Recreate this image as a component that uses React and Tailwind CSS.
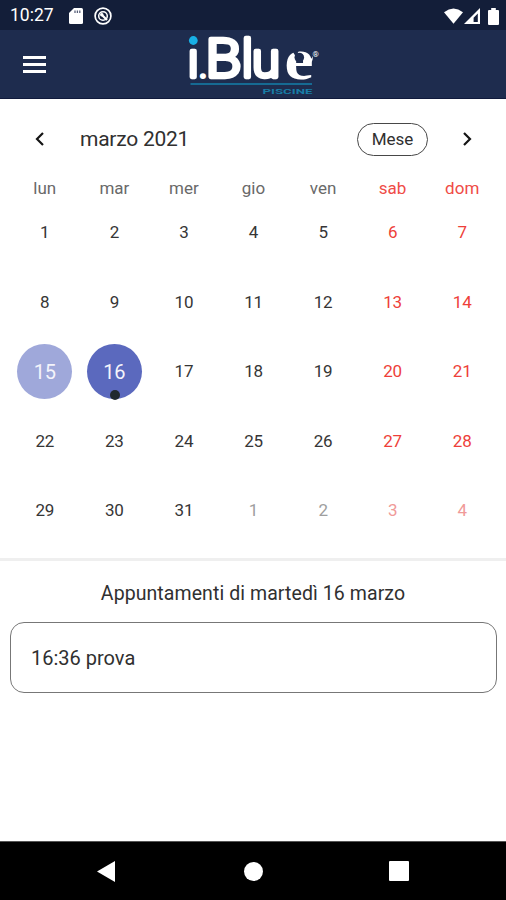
const WEEKDAYS = ["lun", "mar", "mer", "gio", "ven", "sab", "dom"];

// March 2021 starts on a Monday; the last row spills into April.
const DAYS = Array.from({ length: 35 }, (_, i) => ({
  label: i < 31 ? i + 1 : i - 30,
  weekend: i % 7 > 4,
  outside: i >= 31,
}));

function dayColor({ weekend, outside }) {
  if (weekend) return outside ? "text-[#f09a98]" : "text-[#ee3f3a]";
  return outside ? "text-[#9e9e9e]" : "text-[#363636]";
}

function StatusBar() {
  return (
    <div className="flex h-[30px] items-center bg-[#131e39] pt-[2px] pl-[10px] pr-[7px] text-white">
      <span className="w-[45px] whitespace-nowrap text-[17.5px] leading-none">10:27</span>
      <svg className="ml-[14px] h-[16px] w-[14px]" viewBox="0 0 14 16">
        <path d="M5 0h7.500q1.500 0 1.500 1.500v13q0 1.500-1.500 1.500h-11q-1.500 0-1.500-1.500V5z" fill="#fff" />
        <path d="M6 2.500v2.500M8.400 2.500v2.500M10.800 2.500v2.500" stroke="#59617a" strokeWidth="1.300" />
      </svg>
      <svg className="ml-[11px] size-[18px]" viewBox="0 0 18 18" fill="none" stroke="#fff">
        <circle cx="9" cy="9" r="7.900" strokeWidth="1.700" />
        <circle cx="9" cy="9" r="4.300" strokeWidth="1.500" />
        <path d="M7 7l6 6" strokeWidth="2.200" />
        <circle cx="7.800" cy="7.800" r="1.700" fill="#fff" stroke="none" />
      </svg>
      <svg className="ml-auto h-[16px] w-[19px]" viewBox="0 0 19 16">
        <path d="M0 4.200Q9.500-3.200 19 4.200L9.500 15.800z" fill="#fff" />
      </svg>
      <svg className="ml-[1px] h-[16px] w-[16px]" viewBox="0 0 16 16">
        <path d="M16 0v16H0z M13.800 5.500L9.600 9.700v4.400h4.200z" fill="#fff" fillRule="evenodd" />
      </svg>
      <svg className="ml-[8px] h-[17px] w-[11px]" viewBox="0 0 11 17">
        <path d="M3.200 0h4.600v2H10q1 0 1 1v13q0 1-1 1H1q-1 0-1-1V3q0-1 1-1h2.200z" fill="#fff" />
      </svg>
    </div>
  );
}

function Logo() {
  return (
    <svg className="h-[68px] w-[140px] overflow-visible" viewBox="183 30 140 68" fill="#fff">
      <g fontFamily="Roboto, sans-serif" fontWeight="300" fontSize="54" stroke="#fff" strokeWidth="4.300" strokeLinejoin="round">
        <text x="187.700" y="77.200" fontSize="49">ı</text>
        <text x="205.500" y="77.200" textLength="36" lengthAdjust="spacingAndGlyphs">B</text>
        <text x="241.600" y="77.200" fontSize="52">l</text>
        <text x="252" y="77.200" textLength="28" lengthAdjust="spacingAndGlyphs" fontSize="49">u</text>
      </g>
      <circle cx="193.300" cy="40.500" r="4.400" fill="#18b0e6" />
      <text x="197.500" y="79" fontSize="38" fontFamily="Roboto, sans-serif" fontWeight="700">.</text>
      <text x="284.500" y="78.500" textLength="29" lengthAdjust="spacingAndGlyphs" fontSize="59" fontFamily="Liberation Serif, serif" fontWeight="700">e</text>
      <g fill="#1e2c4e">
        <circle cx="299.300" cy="57.500" r="4.800" />
        <path d="M291 49L301 49Q295 53 298 60Z" />
      </g>
      <path d="M305 61Q311 61 313 56Q313 65 305 66Z" />
      <text x="312.500" y="57" fontSize="8" fontFamily="Roboto, sans-serif">®</text>
      <path d="M190.500 84H312" stroke="#147fab" strokeWidth="1.300" />
      <text x="262.500" y="93.500" textLength="50" lengthAdjust="spacingAndGlyphs" fontSize="7.500" fontFamily="Roboto, sans-serif" fontWeight="700" fill="#187da6">PISCINE</text>
    </svg>
  );
}

function AppBar() {
  return (
    <div className="flex h-[69px] items-start border-b border-[#101a3c] bg-[#1e2c4e]">
      <button className="mt-[26px] ml-[23px] flex w-[23px] flex-col gap-[4px]" aria-label="Menu">
        <span className="h-[3px] w-full bg-white" />
        <span className="h-[3px] w-full bg-white" />
        <span className="h-[3px] w-full bg-white" />
      </button>
      <div className="ml-[137px]"><Logo /></div>
    </div>
  );
}

function CalendarHeader() {
  return (
    <div className="flex h-[46px] items-center text-[#303030]">
      <svg className="ml-[35px] h-[14px] w-[9px]" viewBox="0 0 9 14" fill="none" stroke="#151515" strokeWidth="2.200">
        <path d="M8 1L2 7l6 6" />
      </svg>
      <h1 className="ml-[36px] text-[21px] leading-none tracking-[-0.25px]">marzo 2021</h1>
      <button className="ml-auto flex h-[33px] w-[71px] items-center justify-center rounded-full border border-[#484848] text-[17px] leading-none">
        Mese
      </button>
      <svg className="mr-[34px] ml-[35px] h-[14px] w-[9px]" viewBox="0 0 9 14" fill="none" stroke="#151515" strokeWidth="2.200">
        <path d="M1 1l6 6-6 6" />
      </svg>
    </div>
  );
}

function Day({ day }) {
  if (day.label === 15 || day.label === 16) {
    return (
      <div className={`relative flex size-[55px] items-center justify-center rounded-full text-[20px] text-[#f4f4fb] ${day.label === 16 ? "bg-[#5b69be]" : "bg-[#9fa8da]"}`}>
        {day.label}
        {day.label === 16 && <span className="absolute bottom-[-1px] left-[23px] size-[10px] rounded-full bg-[#20292f]" />}
      </div>
    );
  }
  return <span className={dayColor(day)}>{day.label}</span>;
}

export default function App() {
  return (
    <div className="flex h-[900px] w-[506px] flex-col overflow-hidden bg-white font-['Roboto',sans-serif]">
      <StatusBar />
      <AppBar />
      <main className="flex flex-1 flex-col pt-[17px]">
        <CalendarHeader />
        <div className="mt-[14px] grid grid-cols-7 pr-[9px] pl-[10px] text-center text-[17px] leading-[24px]">
          {WEEKDAYS.map((name, i) => (
            <span key={name} className={i > 4 ? "text-[#ef4b46]" : "text-[#696969]"}>{name}</span>
          ))}
        </div>
        <div className="-mt-[2px] grid auto-rows-[69.5px] grid-cols-7 pr-[9px] pl-[10px] text-[17px] tracking-[-0.2px]">
          {DAYS.map((day, i) => (
            <div key={i} className="flex items-center justify-center"><Day day={day} /></div>
          ))}
        </div>
        <div className="mt-[12px] h-[3px] bg-[#efefef]" />
        <h2 className="mt-[20px] text-center text-[19.5px] leading-[26px] tracking-[0.08px] text-[#303030]">Appuntamenti di martedì 16 marzo</h2>
        <div className="mr-[9px] ml-[10px] mt-[15px] flex h-[71px] items-center rounded-[14px] border border-[#777] pt-[2px] pl-[20px] text-[20px] text-[#303030]">
          16:36 prova
        </div>
      </main>
      <nav className="flex h-[59px] items-center border-t border-[#555] bg-black pl-[97px]">
        <svg className="h-[21px] w-[18px]" viewBox="0 0 18 21"><path d="M18 0v21L0 10.500z" fill="#fff" /></svg>
        <span className="ml-[129px] size-[19px] rounded-full bg-white" />
        <span className="ml-[126px] size-[20px] rounded-[1px] bg-white" />
      </nav>
    </div>
  );
}
